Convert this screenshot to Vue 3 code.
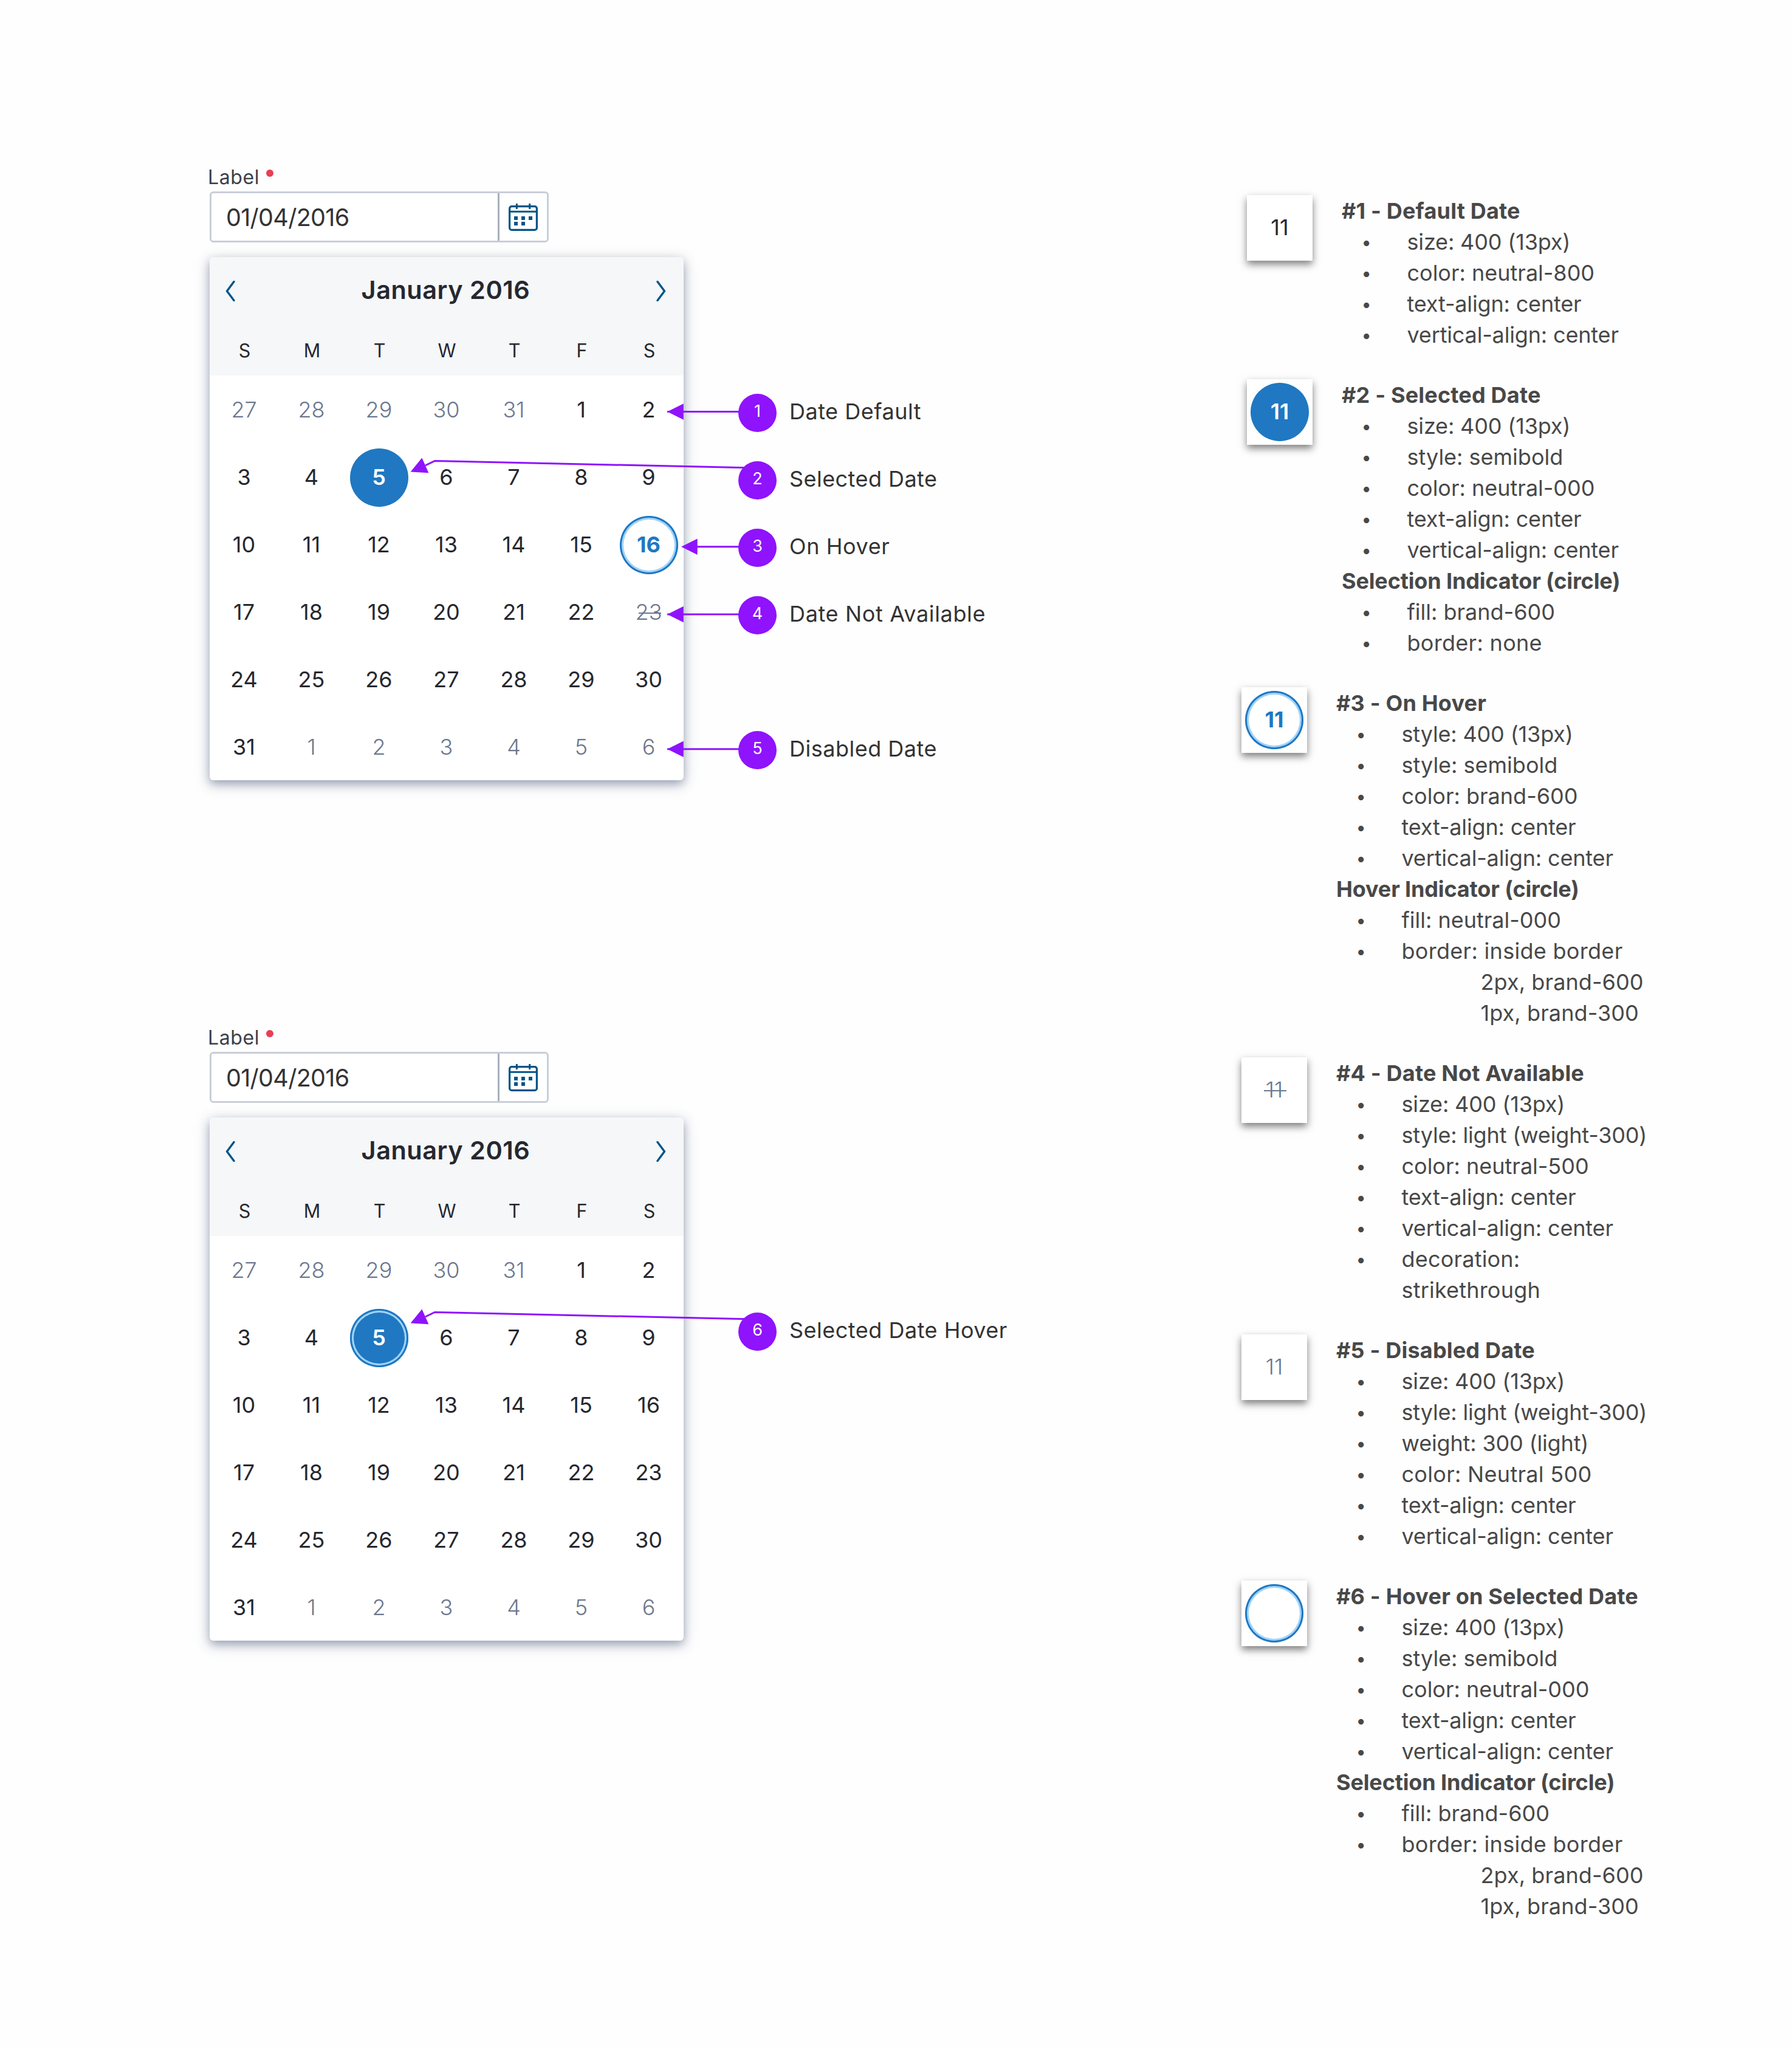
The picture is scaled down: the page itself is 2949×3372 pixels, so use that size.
<script setup>
const weekdays = ['S', 'M', 'T', 'W', 'T', 'F', 'S']

// Days shown in the grid: the end of December, all of January, the start of February.
function buildDays(states) {
  const days = []
  for (let d = 27; d <= 31; d++) days.push({ key: `p${d}`, n: d, state: 'disabled' })
  for (let d = 1; d <= 31; d++) days.push({ key: `c${d}`, n: d, state: states[d] || '' })
  for (let d = 1; d <= 6; d++) days.push({ key: `n${d}`, n: d, state: 'disabled' })
  return days
}

const examples = [
  {
    id: 'states',
    days: buildDays({ 5: 'selected', 16: 'hover', 23: 'unavailable' }),
    callouts: [
      { n: 1, text: 'Date Default', ls: 0.5 },
      { n: 2, text: 'Selected Date', ls: 0.45 },
      { n: 3, text: 'On Hover', ls: 0.6 },
      { n: 4, text: 'Date Not Available', ls: 0.65 },
      null,
      { n: 5, text: 'Disabled Date', ls: 0.5 }
    ],
    lines: [
      '753,406.5 880,406.5',
      '355,495 370.5,487.5 895,499',
      '800,628.8 880,628.8',
      '753,740 880,740',
      '753,961.8 880,961.8'
    ],
    heads: [
      '753.2,406.5 779.8,393.2 779.8,419.8',
      '330.6,505.4 349.4,482.6 360.4,507.2',
      '776,628.8 802.7,615.5 802.7,642.1',
      '753.2,740 779.8,726.7 779.8,753.3',
      '753.2,961.8 779.8,948.5 779.8,975.1'
    ]
  },
  {
    id: 'selected-date',
    days: buildDays({ 5: 'selected selected-hover' }),
    callouts: [{ n: 6, text: 'Selected Date Hover', ls: 0.5 }],
    lines: ['355,480 370.5,472.5 895,484'],
    heads: ['330.6,490.4 349.4,467.6 360.4,492.2']
  }
]

const specs = [
  {
    title: '#1 - Default Date', cell: '', n: '11',
    groups: [{ items: ['size: 400 (13px)', 'color: neutral-800', 'text-align: center', 'vertical-align: center'] }]
  },
  {
    title: '#2 - Selected Date', cell: 'selected', n: '11',
    groups: [
      { items: ['size: 400 (13px)', 'style: semibold', 'color: neutral-000', 'text-align: center', 'vertical-align: center'] },
      { heading: 'Selection Indicator (circle)', items: ['fill: brand-600', 'border: none'] }
    ]
  },
  {
    title: '#3 - On Hover', cell: 'hover', n: '11', shifted: true,
    groups: [
      { items: ['style: 400 (13px)', 'style: semibold', 'color: brand-600', 'text-align: center', 'vertical-align: center'] },
      { heading: 'Hover Indicator (circle)', items: ['fill: neutral-000', 'border: inside border'], sub: ['2px, brand-600', '1px, brand-300'] }
    ]
  },
  {
    title: '#4 - Date Not Available', cell: 'unavailable', n: '11', shifted: true,
    groups: [{ items: ['size: 400 (13px)', 'style: light (weight-300)', 'color: neutral-500', 'text-align: center', 'vertical-align: center', 'decoration: strikethrough'] }]
  },
  {
    title: '#5 - Disabled Date', cell: 'disabled', n: '11', shifted: true,
    groups: [{ items: ['size: 400 (13px)', 'style: light (weight-300)', 'weight: 300 (light)', 'color: Neutral 500', 'text-align: center', 'vertical-align: center'] }]
  },
  {
    title: '#6 - Hover on Selected Date', cell: 'hover', n: '', shifted: true,
    groups: [
      { items: ['size: 400 (13px)', 'style: semibold', 'color: neutral-000', 'text-align: center', 'vertical-align: center'] },
      { heading: 'Selection Indicator (circle)', items: ['fill: brand-600', 'border: inside border'], sub: ['2px, brand-600', '1px, brand-300'] }
    ]
  }
]

// Tracking class for a list entry, by the shape of its text.
function tracking(t) {
  if (t.startsWith('decoration')) return 'narrow'
  if (t.startsWith('border') || t.includes('Neutral')) return 'loose'
  if (t.includes('align') || t.includes('(')) return 'tight'
  return ''
}
</script>

<template>
  <main class="page">
    <div class="examples">
      <section v-for="ex in examples" :key="ex.id" class="example">
        <div class="picker">
          <label class="label">Label<i class="required"></i></label>
          <div class="field">
            <span class="value">01/04/2016</span>
            <button class="trigger" type="button" aria-label="Open calendar">
              <svg width="48" height="45" viewBox="0 0 48 45">
                <rect x="1.6" y="4.6" width="44.8" height="38.8" rx="3.5" fill="none" stroke="currentColor" stroke-width="3.2" />
                <path d="M1 13.3H47M13.4 0V9M34.7 0V9" fill="none" stroke="currentColor" stroke-width="3" />
                <path d="M9 21h6v6H9zM21 21h6v6h-6zM33 21h6v6h-6zM9 30h6v6H9zM21 30h6v6h-6z" fill="currentColor" />
              </svg>
            </button>
          </div>
          <div class="calendar">
            <header class="head">
              <div class="month-row">
                <svg class="chevron" width="16" height="34" viewBox="0 0 16 34"><path d="M14 1.5L2.5 17L14 32.5" /></svg>
                <h2 class="month">January 2016</h2>
                <svg class="chevron" width="16" height="34" viewBox="0 0 16 34"><path d="M2 1.5L13.5 17L2 32.5" /></svg>
              </div>
              <div class="weekdays">
                <span v-for="(w, i) in weekdays" :key="i">{{ w }}</span>
              </div>
            </header>
            <div class="days">
              <div v-for="d in ex.days" :key="d.key" class="slot">
                <span class="day" :class="d.state">{{ d.n }}</span>
              </div>
            </div>
          </div>
        </div>
        <svg class="arrows" width="930" height="1020" viewBox="0 0 930 1020">
          <polyline v-for="l in ex.lines" :key="l" :points="l" />
          <polygon v-for="h in ex.heads" :key="h" :points="h" />
        </svg>
        <div class="callouts" :class="ex.id">
          <div v-for="(c, i) in ex.callouts" :key="i" class="callout">
            <template v-if="c">
              <span class="marker">{{ c.n }}</span>
              <span class="caption" :style="{ letterSpacing: c.ls + 'px' }">{{ c.text }}</span>
            </template>
          </div>
        </div>
      </section>
    </div>

    <aside class="specs">
      <section v-for="s in specs" :key="s.title" class="spec" :class="{ shifted: s.shifted }">
        <div class="swatch"><span class="day" :class="s.cell">{{ s.n }}</span></div>
        <div class="notes">
          <h3 class="title">{{ s.title }}</h3>
          <template v-for="(g, i) in s.groups" :key="i">
            <h3 v-if="g.heading">{{ g.heading }}</h3>
            <ul>
              <li v-for="t in g.items" :key="t"><span class="bullet">•</span><span class="text" :class="tracking(t)">{{ t }}</span></li>
            </ul>
            <p v-for="t in g.sub || []" :key="t" class="sub">{{ t }}</p>
          </template>
        </div>
      </section>
    </aside>
  </main>
</template>

<style>
body {
  margin: 0;
  background: #fefefe;
}
</style>

<style scoped>
.page {
  box-sizing: border-box;
  display: flex;
  width: 2949px;
  height: 3372px;
  padding-left: 345px;
  overflow: hidden;
  background: #fefefe;
  font-family: Inter, "Liberation Sans", sans-serif;
  font-size: 36px;
  color: #26282f;
}

h2, h3, p, ul {
  margin: 0;
  padding: 0;
}

.examples {
  width: 1707px;
  padding-top: 271px;
}

.example {
  position: relative;
  display: flex;
  height: 1416px;
}

.picker {
  width: 780px;
}

.label {
  display: flex;
  height: 43px;
  margin-left: -3px;
  padding-top: 1px;
  font-size: 32px;
  line-height: 40px;
  letter-spacing: 0.6px;
  color: #3a404b;
}

.required {
  width: 12px;
  height: 12px;
  margin: 7px 0 0 11px;
  border-radius: 50%;
  background: #e83f55;
}

.field {
  box-sizing: border-box;
  display: flex;
  width: 558px;
  height: 84px;
  border: 3px solid #c9ced8;
  border-radius: 6px;
  background: #fff;
}

.value {
  flex: 1;
  padding: 1px 0 0 24px;
  font-size: 39.5px;
  line-height: 78px;
  letter-spacing: -0.7px;
  color: #333;
}

.trigger {
  box-sizing: border-box;
  display: flex;
  justify-content: center;
  align-items: center;
  width: 81px;
  height: 78px;
  padding: 0;
  border: 0;
  border-left: 3px solid #a7b0bd;
  background: none;
  color: #005487;
}

.calendar {
  height: 861px;
  margin-top: 24px;
  overflow: visible;
  border-radius: 6px;
  background: #fff;
  box-shadow: 0 6px 16px rgba(70, 84, 116, 0.5), 0 6px 30px rgba(70, 84, 116, 0.14);
}

.head {
  box-sizing: border-box;
  height: 195px;
  padding-top: 24px;
  border-radius: 6px 6px 0 0;
  background: #f5f7f9;
}

.month-row {
  display: flex;
  justify-content: space-between;
  align-items: center;
  height: 60px;
  padding: 2px 29px 0 26px;
}

.chevron {
  fill: none;
  stroke: #005487;
  stroke-width: 3.4;
  stroke-linecap: round;
  stroke-linejoin: round;
}

.month {
  margin-top: -5px;
  font-size: 41.5px;
  font-weight: 600;
  line-height: 60px;
  letter-spacing: 0.5px;
}

.weekdays {
  display: grid;
  grid-template-columns: repeat(7, 111px);
  margin-top: 48px;
  padding-left: 2px;
  font-size: 30.5px;
  line-height: 40px;
  text-align: center;
}

.days {
  display: grid;
  grid-template-columns: repeat(7, 111px);
  grid-auto-rows: 111px;
  padding-left: 1px;
}

.slot {
  display: flex;
  justify-content: center;
  align-items: center;
}

.day {
  box-sizing: border-box;
  display: block;
  width: 96px;
  height: 96px;
  margin-top: 2px;
  border-radius: 50%;
  line-height: 94px;
  text-align: center;
}

.disabled,
.unavailable {
  font-weight: 300;
  color: #6c778d;
}

.unavailable {
  position: relative;
}

/* Strike line, wider than the digits it crosses. */
.unavailable::after {
  content: "";
  position: absolute;
  top: 48px;
  left: 31px;
  width: 37px;
  height: 2px;
  background: #6c778d;
}

.selected {
  background: #1f78c1;
  font-weight: 600;
  color: #fff;
}

.hover {
  background: #fff;
  box-shadow: inset 0 0 0 3px #1f78c1, inset 0 0 0 6px #a0d3fb;
  font-weight: 700;
  color: #1f78c1;
}

.selected-hover {
  box-shadow: inset 0 0 0 3px #1f78c1, inset 0 0 0 6px #a0d3fb;
}

.arrows {
  position: absolute;
  top: 0;
  left: 0;
}

.arrows polyline {
  fill: none;
  stroke: #8f13fd;
  stroke-width: 3;
}

.arrows polygon {
  fill: #8f13fd;
}

.callouts {
  position: relative;
  padding: 353px 0 0 90px;
}

.callouts.selected-date {
  padding-top: 449px;
}

.callout {
  display: flex;
  align-items: center;
  height: 111px;
}

.marker {
  width: 63px;
  height: 63px;
  border-radius: 50%;
  background: #8f13fd;
  font-size: 27px;
  line-height: 57px;
  text-align: center;
  color: #fff;
}

.caption {
  margin: -5px 0 0 21px;
  line-height: 44px;
  color: #333;
  white-space: nowrap;
}

.specs {
  display: flex;
  flex-direction: column;
  gap: 48px;
  padding-top: 321px;
  color: #484848;
}

.spec {
  display: flex;
  gap: 48px;
}

.shifted {
  margin-left: -9px;
}

.swatch {
  display: flex;
  justify-content: center;
  align-items: center;
  width: 108px;
  height: 108px;
  background: #fff;
  box-shadow: 0 6px 12px rgba(0, 0, 0, 0.5);
  color: #26282f;
}

.swatch .day {
  margin-top: 0;
}

.notes {
  margin: 1px 0 -1px;
  line-height: 51px;
}

.notes h3 {
  font-size: 36px;
  font-weight: 700;
  letter-spacing: -0.14px;
}

.notes h3.title {
  letter-spacing: 0.2px;
}

.notes ul {
  list-style: none;
}

.notes li {
  display: flex;
}

.bullet {
  width: 75px;
  margin-left: 32.5px;
  font-size: 29px;
}

.text.narrow {
  width: 260px;
  letter-spacing: 0.2px;
}

.text.loose {
  letter-spacing: 0.3px;
}

.text.tight {
  letter-spacing: -0.16px;
}

.sub {
  padding-left: 237.5px;
  letter-spacing: 0.1px;
}
</style>
